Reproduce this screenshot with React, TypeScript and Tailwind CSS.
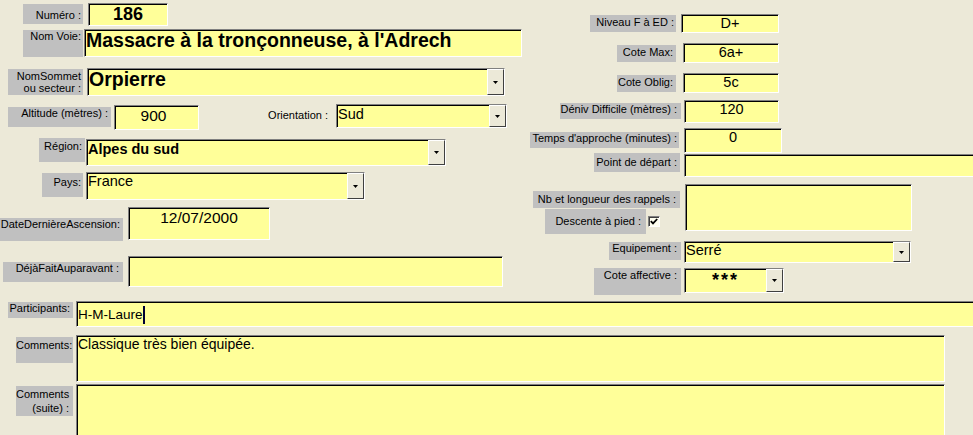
import React from "react";

type P = { className?: string; children?: React.ReactNode };

const L = ({ className = "", children }: P) => (
  <div
    className={`shrink-0 bg-[#C0C0C0] text-right text-[11px] text-black whitespace-nowrap overflow-hidden ${className}`}
  >
    {children}
  </div>
);

const F = ({ className = "", children }: P) => (
  <div
    className={`shrink-0 flex bg-[#FFFF99] border border-t-[#808080] border-l-[#808080] border-r-white border-b-white shadow-[inset_1px_1px_0_#000] text-black overflow-hidden ${className}`}
  >
    {children}
  </div>
);

const T = ({ className = "", children }: P) => (
  <div className={`flex-1 min-w-0 whitespace-nowrap overflow-hidden ${className}`}>{children}</div>
);

const Drop = () => (
  <div className="shrink-0 w-[17px] h-full flex items-center justify-center bg-[#ECE9D8] border-l border-t border-l-white border-t-white border-r border-b border-r-[#404040] border-b-[#404040]">
    <svg width="5" height="3" viewBox="0 0 5 3">
      <polygon points="0,0 5,0 2.5,3" fill="#000" />
    </svg>
  </div>
);

export default function App() {
  return (
    <div className="w-[973px] h-[435px] bg-[#ECE9D8] overflow-hidden font-['Liberation_Sans',Arial,sans-serif] text-black">
      <div className="flex h-[299px]">
        {/* Left column */}
        <div className="w-[525px] shrink-0 flex flex-col">
          <div className="flex items-start h-[26px] mt-[3px]">
            <L className="ml-[23px] mt-[1px] w-[60px] h-[20px] pt-[5px] pr-[2px] leading-[13px]">Numéro :</L>
            <F className="ml-[5px] w-[80px] h-[23px]">
              <T className="text-center font-bold text-[18px] leading-[20px]">186</T>
            </F>
          </div>
          <div className="flex items-start h-[39px]">
            <L className="ml-[23px] mt-[1px] w-[60px] h-[27px] pr-[2px] leading-[13px]">Nom Voie:</L>
            <F className="ml-[1px] w-[438px] h-[28px]">
              <T className="pl-[1px] font-bold text-[19.5px] leading-[20px]">Massacre à la tronçonneuse, à l'Adrech</T>
            </F>
          </div>
          <div className="flex items-start h-[36px]">
            <L className="ml-[8px] mt-[1px] w-[75px] h-[26px] pt-[1px] pr-[2px] leading-[12px]">
              NomSommet
              <br />
              ou secteur :
            </L>
            <F className="ml-[4px] w-[418px] h-[28px]">
              <T className="pl-[1px] font-bold text-[19.5px] leading-[20px]">Orpierre</T>
              <Drop />
            </F>
          </div>
          <div className="flex items-start h-[34px]">
            <L className="ml-[8px] mt-[3px] w-[103px] h-[20px] pr-[3px] leading-[12px]">Altitude (mètres) :</L>
            <F className="ml-[3px] mt-[1px] w-[85px] h-[25px]">
              <T className="text-center pr-[6px] text-[15.5px] leading-[20px]">900</T>
            </F>
            <div className="shrink-0 ml-[67px] mt-[5px] w-[64px] text-right text-[11px] leading-[13px] pr-[2px] whitespace-nowrap">
              Orientation :
            </div>
            <F className="ml-[6px] w-[171px] h-[24px]">
              <T className="pl-[1px] text-[14.5px] leading-[18px]">Sud</T>
              <Drop />
            </F>
          </div>
          <div className="flex items-start h-[34px]">
            <L className="ml-[39px] w-[46px] h-[24px] pt-[2px] pr-[3px] leading-[12px]">Région:</L>
            <F className="ml-[1px] mt-[1px] w-[360px] h-[27px]">
              <T className="pl-[1px] font-bold text-[14.5px] leading-[18px]">Alpes du sud</T>
              <Drop />
            </F>
          </div>
          <div className="flex items-start h-[35px]">
            <L className="ml-[42px] mt-[1px] w-[41px] h-[24px] pt-[3px] pr-[2px] leading-[13px]">Pays:</L>
            <F className="ml-[3px] w-[279px] h-[28px]">
              <T className="pl-[1px] text-[14.5px] leading-[16px]">France</T>
              <Drop />
            </F>
          </div>
          <div className="flex items-start h-[49px]">
            <L className="mt-[11px] w-[123px] h-[23px] pr-[3px] leading-[12px]">DateDernièreAscension:</L>
            <F className="ml-[5px] w-[142px] h-[33px]">
              <T className="text-center text-[15.5px] leading-[20px]">12/07/2000</T>
            </F>
          </div>
          <div className="flex items-start h-[32px]">
            <L className="ml-[3px] mt-[6px] w-[120px] h-[20px] pr-[4px] leading-[13px]">DéjàFaitAuparavant :</L>
            <F className="ml-[5px] w-[375px] h-[31px]" />
          </div>
        </div>

        {/* Right column */}
        <div className="flex-1 flex flex-col">
          <div className="flex items-start h-[29px] mt-[14px]">
            <L className="ml-[65px] mt-[1px] w-[86px] h-[17px] pt-[1px] pr-[2px] leading-[13px]">Niveau F à ED :</L>
            <F className="ml-[5px] w-[98px] h-[19px]">
              <T className="text-center text-[14.5px] leading-[16px]">D+</T>
            </F>
          </div>
          <div className="flex items-start h-[30px]">
            <L className="ml-[92px] mt-[2px] w-[59px] h-[17px] pt-[1px] pr-[3px] leading-[13px]">Cote Max:</L>
            <F className="ml-[7px] w-[96px] h-[20px]">
              <T className="text-center text-[14.5px] leading-[16px]">6a+</T>
            </F>
          </div>
          <div className="flex items-start h-[27px]">
            <L className="ml-[92px] mt-[2px] w-[59px] h-[17px] pt-[1px] pr-[3px] leading-[13px]">Cote Oblig:</L>
            <F className="ml-[7px] w-[96px] h-[20px]">
              <T className="text-center text-[14.5px] leading-[16px]">5c</T>
            </F>
          </div>
          <div className="flex items-start h-[28px]">
            <L className="ml-[35px] mt-[3px] w-[121px] h-[16px] pr-[4px] leading-[13px]">Déniv Difficile (mètres) :</L>
            <F className="ml-[3px] w-[95px] h-[23px]">
              <T className="text-center text-[14.5px] leading-[16px]">120</T>
            </F>
          </div>
          <div className="flex items-start h-[25px]">
            <L className="ml-[5px] mt-[4px] w-[149px] h-[16px] pr-[2px] leading-[12px]">Temps d'approche (minutes) :</L>
            <F className="ml-[5px] w-[98px] h-[25px]">
              <T className="text-center text-[14.5px] leading-[16px]">0</T>
            </F>
          </div>
          <div className="flex items-start h-[31px]">
            <L className="ml-[69px] w-[86px] h-[19px] pt-[3px] pr-[3px] leading-[13px]">Point de départ :</L>
            <F className="ml-[4px] mt-[1px] w-[300px] h-[23px]" />
          </div>
          <div className="flex items-start h-[57px]">
            <div className="w-[160px] shrink-0 flex flex-col">
              <L className="ml-[8px] mt-[7px] w-[147px] h-[17px] pt-[2px] pr-[4px] leading-[13px]">Nb et longueur des rappels :</L>
              <div className="flex items-start">
                <L className="ml-[20px] mt-[1px] w-[101px] h-[25px] pt-[6px] pr-[5px] leading-[13px]">Descente à pied :</L>
                <div className="shrink-0 ml-[2px] mt-[8px] w-[12px] h-[11px] bg-[#FFFFF0] border border-t-[#808080] border-l-[#808080] border-r-white border-b-white shadow-[inset_1px_1px_0_#404040] flex items-center justify-center">
                  <svg width="8" height="7" viewBox="0 0 8 7">
                    <path d="M0.8 3.2 L3 5.4 L7.2 1" stroke="#000" strokeWidth="1.8" fill="none" />
                  </svg>
                </div>
              </div>
            </div>
            <F className="w-[227px] h-[47px]" />
          </div>
          <div className="flex items-start h-[27px]">
            <L className="ml-[84px] mt-[1px] w-[72px] h-[18px] pr-[4px] leading-[12px]">Equipement :</L>
            <F className="ml-[3px] w-[227px] h-[22px]">
              <T className="pl-[1px] text-[14.5px] leading-[16px]">Serré</T>
              <Drop />
            </F>
          </div>
          <div className="flex items-start">
            <L className="ml-[69px] w-[87px] h-[27px] pt-[1px] pr-[4px] leading-[13px]">Cote affective :</L>
            <F className="ml-[3px] w-[100px] h-[25px]">
              <T className="text-center text-[18px] leading-[18px] pt-[2px] tracking-[2px] font-bold">***</T>
              <Drop />
            </F>
          </div>
        </div>
      </div>

      {/* Bottom section */}
      <div className="flex items-start h-[34px] mt-[2px]">
        <L className="ml-[8px] mt-[1px] w-[65px] h-[16px] pr-[3px] leading-[12px]">Participants:</L>
        <F className="ml-[3px] w-[900px] h-[26px]">
          <T className="pl-[1px] pt-[5px] text-[13.5px] leading-[16px]">
            H-M-Laure
            <span className="inline-block align-top w-[2px] h-[18px] -mt-[1px] bg-[#000033]" />
          </T>
        </F>
      </div>
      <div className="flex items-start h-[49px]">
        <L className="ml-[16px] mt-[2px] w-[57px] h-[26px] pt-[2px] pr-[4px] leading-[13px]">Comments:</L>
        <F className="ml-[3px] w-[869px] h-[47px]">
          <T className="pl-[1px] text-[14px] leading-[16px]">Classique très bien équipée.</T>
        </F>
      </div>
      <div className="flex items-start">
        <L className="ml-[16px] mt-[2px] w-[57px] h-[30px] pt-[1px] pr-[4px] leading-[14px]">
          Comments
          <br />
          (suite) :
        </L>
        <F className="ml-[3px] w-[869px] h-[60px]" />
      </div>
    </div>
  );
}
